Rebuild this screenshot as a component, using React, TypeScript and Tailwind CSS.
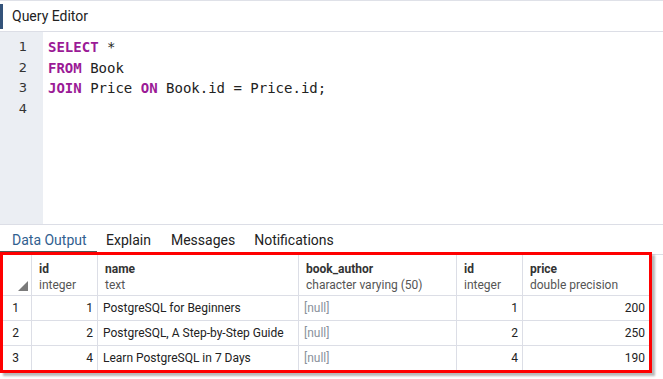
import type { ReactNode } from 'react'

const cols = [
  { w: 'w-[32px]', name: '', type: '' },
  { w: 'w-[66px]', name: 'id', type: 'integer' },
  { w: 'w-[201px]', name: 'name', type: 'text' },
  { w: 'w-[158px]', name: 'book_author', type: 'character varying (50)' },
  { w: 'w-[66px]', name: 'id', type: 'integer' },
  { w: 'w-[129px]', name: 'price', type: 'double precision' },
]

const rows = [
  { n: 1, id: 1, name: 'PostgreSQL for Beginners', id2: 1, price: 200 },
  { n: 2, id: 2, name: 'PostgreSQL, A Step-by-Step Guide', id2: 2, price: 250 },
  { n: 3, id: 4, name: 'Learn PostgreSQL in 7 Days', id2: 4, price: 190 },
]

function Kw({ children }: { children: ReactNode }) {
  return <span className="font-bold text-[#9b1a96]">{children}</span>
}

export default function App() {
  return (
    <div className="w-[663px] h-[379px] bg-white overflow-hidden border-t border-[#dfe1e8] font-['Roboto',sans-serif] text-[#222]">
      {/* panel title */}
      <div className="h-[31px] flex items-center border-b border-[#dcdee6]">
        <div className="w-[3px] h-[25px] bg-[#34537a]" />
        <span className="ml-[9px] text-[14px] text-[#222]">Query Editor</span>
      </div>

      {/* editor */}
      <div className="h-[192px] flex">
        <div className="w-[43px] bg-[#ebeef3] pt-[5px] pr-[16px] text-right font-['DejaVu_Sans',sans-serif] text-[13px] leading-[20.5px] text-[#333]">
          <div>1</div>
          <div>2</div>
          <div>3</div>
          <div>4</div>
        </div>
        <div className="pl-[5px] pt-[5px] font-['DejaVu_Sans_Mono',monospace] text-[14px] leading-[20.5px] text-[#222] whitespace-pre">
          <div><Kw>SELECT</Kw> *</div>
          <div><Kw>FROM</Kw> Book</div>
          <div><Kw>JOIN</Kw> Price <Kw>ON</Kw> Book.id = Price.id;</div>
          <div> </div>
        </div>
      </div>

      {/* tabs */}
      <div className="h-[30px] flex items-end border-t border-[#dcdee6] text-[14px]">
        <div className="w-[97px] h-[29px] flex items-center pl-[12px] pt-[4px] text-[#31608f] border-b-[3px] border-[#555]">Data Output</div>
        <div className="h-[29px] flex items-center ml-[9px] pt-[4px] pb-[3px] text-[#222]">Explain</div>
        <div className="h-[29px] flex items-center ml-[20px] pt-[4px] pb-[3px] text-[#222]">Messages</div>
        <div className="h-[29px] flex items-center ml-[19px] pt-[4px] pb-[3px] text-[#222]">Notifications</div>
      </div>

      {/* result grid */}
      <div className="border-t border-[#dcdee6]">
        <div className="relative w-[652px] text-[12px]">
          <div className="flex h-[41px] border-b border-[#dcdee6]">
            {cols.map((c, i) => (
              <div key={i} className={`${c.w} shrink-0 relative border-r border-[#dcdee6] pl-[7px] pt-[6px] leading-[16px]`}>
                {i === 0 ? (
                  <svg className="absolute left-[18px] top-[26px]" width="10" height="10" viewBox="0 0 10 10">
                    <path d="M10 0 L10 10 L0 10 Z" fill="#7a7a7a" />
                  </svg>
                ) : (
                  <>
                    <div className="font-bold text-[#333]">{c.name}</div>
                    <div className="text-[#555]">{c.type}</div>
                  </>
                )}
              </div>
            ))}
          </div>
          {rows.map((r) => (
            <div key={r.n} className="flex h-[25px] border-b border-[#dcdee6] items-stretch">
              <div className="w-[32px] shrink-0 border-r border-[#dcdee6] flex items-center justify-center">{r.n}</div>
              <div className="w-[66px] shrink-0 border-r border-[#dcdee6] flex items-center justify-end pr-[4px]">{r.id}</div>
              <div className="w-[201px] shrink-0 border-r border-[#dcdee6] flex items-center pl-[5px]">{r.name}</div>
              <div className="w-[158px] shrink-0 border-r border-[#dcdee6] flex items-center pl-[5px] text-[#8a929c]">[null]</div>
              <div className="w-[66px] shrink-0 border-r border-[#dcdee6] flex items-center justify-end pr-[4px]">{r.id2}</div>
              <div className="w-[129px] shrink-0 border-r border-[#dcdee6] flex items-center justify-end pr-[6px]">{r.price}</div>
            </div>
          ))}
          {/* red annotation box */}
          <div className="absolute left-0 right-0 top-[-3px] bottom-[-2px] border-[3px] border-[#f00] shadow-[3px_3px_2px_rgba(0,0,0,0.28)]" />
        </div>
      </div>
    </div>
  )
}
